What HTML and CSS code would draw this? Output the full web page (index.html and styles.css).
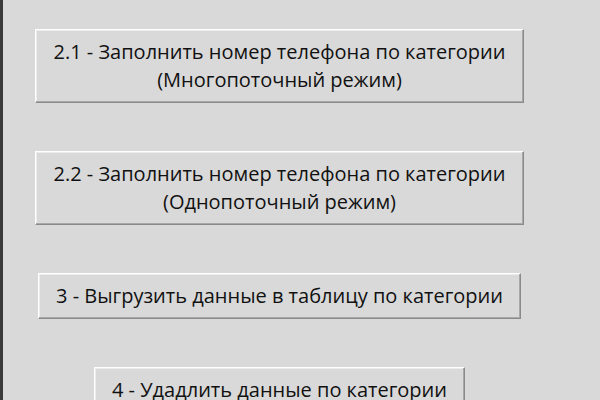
FILE: index.html
```html
<!DOCTYPE html>
<html lang="ru">
<head>
<meta charset="utf-8">
<title>Меню</title>
<link rel="stylesheet" href="styles.css">
</head>
<body>
<div class="window">
  <div class="menu">
    <button class="btn">2.1 - Заполнить номер телефона по категории<br>(Многопоточный режим)</button>
    <button class="btn">2.2 - Заполнить номер телефона по категории<br>(Однопоточный режим)</button>
    <button class="btn">3 - Выгрузить данные в таблицу по категории</button>
    <button class="btn">4 - Удадлить данные по категории</button>
  </div>
</div>
</body>
</html>
```
FILE: styles.css
```css
html, body {
  margin: 0;
  padding: 0;
  background: #d9d9d9;
  overflow: hidden;
}
.window {
  width: 600px;
  height: 400px;
  box-sizing: border-box;
  border-left: 3px solid #3a3a3a;
  background: #d9d9d9;
}
.menu {
  width: 553px;
  display: flex;
  flex-direction: column;
  align-items: center;
  gap: 48px;
  padding-top: 29px;
}
.btn {
  font-family: "Open Sans", "Noto Sans", sans-serif;
  font-size: 20px;
  line-height: 28px;
  color: #111;
  background: #d9d9d9;
  padding: 8px 17px;
  border: 1px solid;
  border-color: #ffffff #8a8a8a #8a8a8a #ffffff;
  box-shadow: inset -1px -1px 0 #a8a8a8, inset 1px 1px 0 #ececec;
  border-radius: 0;
  text-align: center;
  cursor: default;
}
```
